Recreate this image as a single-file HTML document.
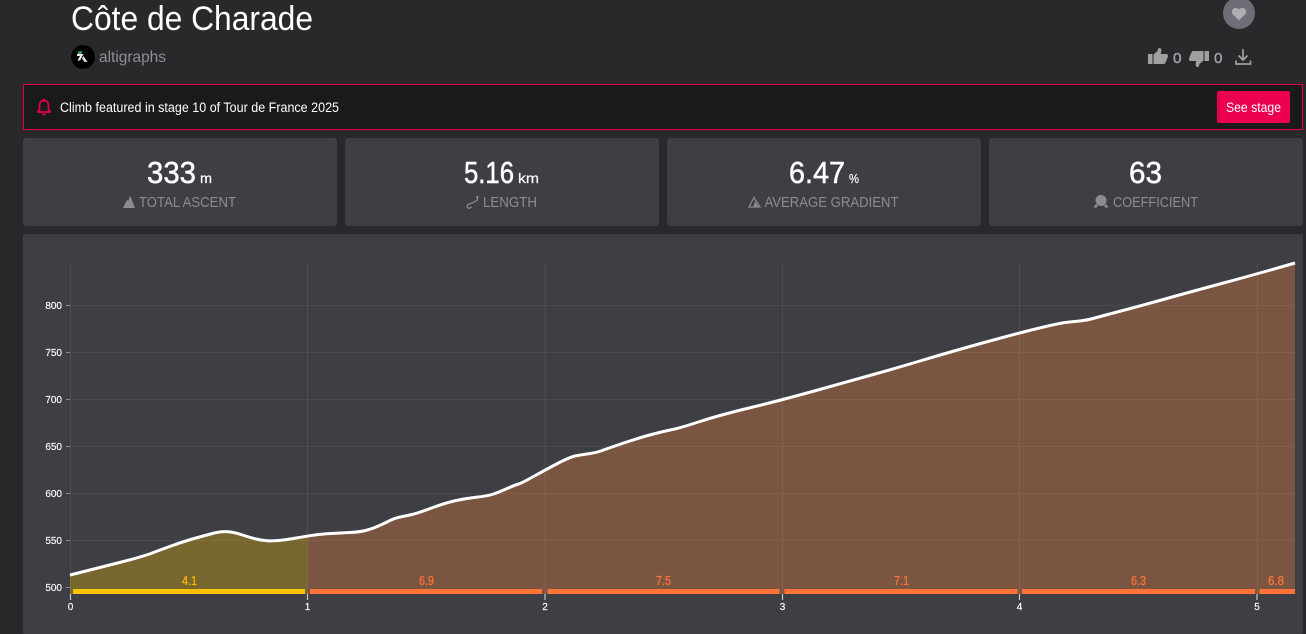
<!DOCTYPE html>
<html lang="en">
<head>
<meta charset="utf-8">
<title>Côte de Charade</title>
<style>
html,body{margin:0;padding:0;background:#29292b;width:1306px;height:634px;overflow:hidden}
svg{display:block}
text{font-family:"Liberation Sans",sans-serif}
</style>
</head>
<body>
<svg xmlns="http://www.w3.org/2000/svg" width="1306" height="634" viewBox="0 0 1306 634">
<defs>
<clipPath id="cy"><rect x="70" y="250" width="237.500" height="350"/></clipPath>
<clipPath id="co"><rect x="307.500" y="250" width="987.500" height="350"/></clipPath>
</defs>
<rect width="1306" height="634" fill="#29292b"/>

<!-- Header -->
<text x="71" y="30" font-size="34" fill="#fff" textLength="242" lengthAdjust="spacingAndGlyphs">Côte de Charade</text>
<circle cx="83" cy="57" r="12" fill="#000"/>
<path d="M78 52.500c1-1.500 3.500-1.500 4.500-.5l-1.500 2h-3z" fill="#2fae5a"/>
<path d="M77 54h6.500l-3.500 6.500h-2.500l2.500-4.500h-3z" fill="#eee"/>
<path d="M83.500 56l4 6h-3l-2.500-3.500z" fill="#ddd"/>
<text x="99" y="62" font-size="15.500" fill="#8e8e93" textLength="67" lengthAdjust="spacingAndGlyphs">altigraphs</text>

<circle cx="1239" cy="13" r="16" fill="#6e6e77"/>
<path d="M1239 20.500l-6.200-6.200a3.900 3.900 0 0 1 5.500-5.500l.7.7.7-.7a3.900 3.900 0 0 1 5.500 5.500z" fill="#adadb2"/>

<!-- thumbs up -->
<path d="M1148 54h4.500v10h-4.500z" fill="#a0a0a0"/>
<path d="M1153.500 54.500l4-3.500 1-3c2.200-.4 3.300 1.200 2.800 3.400l-.6 2.600h5.500c1.500 0 2.200 1.500 1.700 2.800l-2.400 6c-.4 1-1.200 1.200-2.200 1.200h-9.800z" fill="#a0a0a0"/>
<text x="1173" y="63" font-size="14.500" fill="#a3a3a8" stroke="#a3a3a8" stroke-width=".4" textLength="8.500" lengthAdjust="spacingAndGlyphs">0</text>
<!-- thumbs down -->
<path d="M1204.500 51h4.500v10h-4.500z" fill="#a0a0a0"/>
<path d="M1203.500 60.500l-4 3.500-1 3c-2.200.4-3.300-1.200-2.800-3.400l.6-2.600h-5.500c-1.500 0-2.200-1.500-1.700-2.800l2.400-6c.4-1 1.200-1.200 2.200-1.200h9.800z" fill="#a0a0a0"/>
<text x="1214" y="63" font-size="14.500" fill="#a3a3a8" stroke="#a3a3a8" stroke-width=".4" textLength="8.500" lengthAdjust="spacingAndGlyphs">0</text>
<!-- download -->
<path d="M1243 49v11M1238.500 55.500l4.500 4.500 4.500-4.500M1236 60.500v3.500h14.500v-3.500" fill="none" stroke="#a0a0a0" stroke-width="1.700"/>

<!-- Alert -->
<rect x="23.500" y="84.500" width="1279" height="45" fill="#1a1a1d" stroke="#e8004f" stroke-width="1"/>
<path d="M44 100.500c-3 0-4.500 2.200-4.500 5v4l-1.500 1.800v.7h12v-.7l-1.500-1.800v-4c0-2.800-1.500-5-4.500-5z" fill="none" stroke="#e8004f" stroke-width="1.700"/>
<circle cx="44" cy="99.800" r="1" fill="#e8004f"/>
<path d="M42 113.500h4a2 1.800 0 0 1-4 0z" fill="#e8004f"/>
<text x="60" y="112" font-size="13.500" fill="#fff" textLength="279" lengthAdjust="spacingAndGlyphs">Climb featured in stage 10 of Tour de France 2025</text>
<rect x="1217" y="91" width="73" height="32" rx="2" fill="#ea004f"/>
<text x="1226" y="112" font-size="14" fill="#fff" textLength="55" lengthAdjust="spacingAndGlyphs">See stage</text>

<!-- Stat cards -->
<rect x="23" y="138" width="314" height="88" rx="3" fill="#3e3f45"/>
<rect x="345" y="138" width="314" height="88" rx="3" fill="#3e3f45"/>
<rect x="667" y="138" width="314" height="88" rx="3" fill="#3e3f45"/>
<rect x="989" y="138" width="314" height="88" rx="3" fill="#3e3f45"/>

<g stroke="#fff" stroke-width=".5">
<text x="147" y="183" font-size="31" fill="#fff" textLength="49" lengthAdjust="spacingAndGlyphs">333</text>
<text x="464" y="183" font-size="31" fill="#fff" textLength="50" lengthAdjust="spacingAndGlyphs">5.16</text>
<text x="789" y="183" font-size="31" fill="#fff" textLength="56" lengthAdjust="spacingAndGlyphs">6.47</text>
<text x="1129" y="183" font-size="31" fill="#fff" textLength="33" lengthAdjust="spacingAndGlyphs">63</text>
</g>
<text x="200" y="183" font-size="14" fill="#fff" stroke="#fff" stroke-width=".2" textLength="12" lengthAdjust="spacingAndGlyphs">m</text>
<text x="518" y="183" font-size="14" fill="#fff" stroke="#fff" stroke-width=".2" textLength="21" lengthAdjust="spacingAndGlyphs">km</text>
<text x="849" y="183" font-size="13" fill="#fff" stroke="#fff" stroke-width=".2" textLength="10" lengthAdjust="spacingAndGlyphs">%</text>

<path d="M123 208l4-8 1.500 1 1-4.500 1 0 4.500 11.500z" fill="#8c8c92"/>
<text x="139" y="207" font-size="14.500" fill="#8c8c92" textLength="97" lengthAdjust="spacingAndGlyphs">TOTAL ASCENT</text>

<path d="M476 197c2 0 2 3 0 4l-4 2c-2 1-5 1-5 3.500s4 2 4.500 0" fill="none" stroke="#8c8c92" stroke-width="1.200"/>
<circle cx="477.500" cy="197" r="1" fill="#8c8c92"/>
<text x="483" y="207" font-size="14.500" fill="#8c8c92" textLength="54" lengthAdjust="spacingAndGlyphs">LENGTH</text>

<path d="M754 197.500l-5 9.500h11z" fill="none" stroke="#8c8c92" stroke-width="1.300"/>
<path d="M755 201l3.500 6h-5z" fill="#8c8c92"/>
<text x="764.500" y="207" font-size="14.500" fill="#8c8c92" textLength="134" lengthAdjust="spacingAndGlyphs">AVERAGE GRADIENT</text>

<circle cx="1101" cy="200.500" r="5.500" fill="#8c8c92"/>
<path d="M1096 204l-2.500 3.500 3 .3 1.500-2zM1106 204l2.500 3.500-3 .3-1.500-2z" fill="#8c8c92"/>
<text x="1113" y="207" font-size="14.500" fill="#8c8c92" textLength="85" lengthAdjust="spacingAndGlyphs">COEFFICIENT</text>

<!-- Chart panel -->
<rect x="23" y="234" width="1280" height="400" rx="2" fill="#3e3f45"/>

<!-- Area fills -->
<path clip-path="url(#cy)" fill="#78662f" d="M70 575L85 571.250Q100 567.500 121.500 562Q143 556.500 151.500 553.250Q160 550 172.500 545.500Q185 541 195 538.250Q205 535.500 211.500 533.750Q218 532 222 531.750Q226 531.500 230.500 532Q235 532.500 242.500 535Q250 537.500 256 539Q262 540.500 267 540.750Q272 541 278.500 540.500Q285 540 296.250 538Q307.500 536 314.750 535L314.750 594L70 594Z"/>
<path clip-path="url(#co)" fill="#7a5541" d="M296.250 538Q307.500 536 314.750 535Q322 534 331 533.500Q340 533 350 532.500Q360 532 366.500 530.250Q373 528.500 379 525.750Q385 523 390 520.500Q395 518 400 517Q405 516 411 514.750Q417 513.500 431 508.250Q445 503 455 500.750Q465 498.500 476 497.250Q487 496 492 494.500Q497 493 506 489Q515 485 518.500 484Q522 483 533.500 476.500Q545 470 557.500 463.500Q570 457 575 456Q580 455 588.500 453.750Q597 452.500 601.500 450.750Q606 449 623 443.250Q640 437.500 652.500 434.250Q665 431 672.500 429.500Q680 428 700 421.500Q720 415 751 407.500Q782 400 816 390.500Q850 381 875 374Q900 367 925 359.500Q950 352 982.500 343Q1015 334 1037.500 328.500Q1060 323 1067.500 322.250Q1075 321.500 1081.500 320.750Q1088 320 1094 318.250Q1100 316.500 1120 311.250Q1140 306 1165 299Q1190 292 1223.500 283Q1257 274 1295 263L1295 594L296.250 594Z"/>

<!-- Grid -->
<g stroke="#fff" fill="none" stroke-width="1">
<path stroke-opacity=".06" d="M70 305.500H1295M70 352.500H1295M70 399.500H1295M70 446.500H1295M70 493.500H1295M70 540.500H1295"/>
<path stroke-opacity=".08" d="M70.500 264V594M307.500 264V594M545 264V594M782.500 264V594M1019.500 264V594M1257.500 264V594"/>
</g>
<path d="M66 305.500h4M66 352.500h4M66 399.500h4M66 446.500h4M66 493.500h4M66 540.500h4M66 587.500h4" stroke="#8c8c92" stroke-width="1"/>

<!-- Gradient bars -->
<rect x="73" y="589" width="232" height="5" fill="#ffc000"/>
<rect x="310" y="589" width="232" height="5" fill="#ff7337"/>
<rect x="547.500" y="589" width="232" height="5" fill="#ff7337"/>
<rect x="784.500" y="589" width="233" height="5" fill="#ff7337"/>
<rect x="1022" y="589" width="233" height="5" fill="#ff7337"/>
<rect x="1259.500" y="589" width="35.500" height="5" fill="#ff7337"/>

<!-- X ticks -->
<path d="M70.500 594v6M307.500 594v6M545 594v6M782.500 594v6M1019.500 594v6M1257 594v6" stroke="#c8c8cc" stroke-width="1.200"/>

<!-- Profile line -->
<path fill="none" stroke="#fff" stroke-width="3" stroke-linejoin="round" d="M70 575L85 571.250Q100 567.500 121.500 562Q143 556.500 151.500 553.250Q160 550 172.500 545.500Q185 541 195 538.250Q205 535.500 211.500 533.750Q218 532 222 531.750Q226 531.500 230.500 532Q235 532.500 242.500 535Q250 537.500 256 539Q262 540.500 267 540.750Q272 541 278.500 540.500Q285 540 296.250 538Q307.500 536 314.750 535Q322 534 331 533.500Q340 533 350 532.500Q360 532 366.500 530.250Q373 528.500 379 525.750Q385 523 390 520.500Q395 518 400 517Q405 516 411 514.750Q417 513.500 431 508.250Q445 503 455 500.750Q465 498.500 476 497.250Q487 496 492 494.500Q497 493 506 489Q515 485 518.500 484Q522 483 533.500 476.500Q545 470 557.500 463.500Q570 457 575 456Q580 455 588.500 453.750Q597 452.500 601.500 450.750Q606 449 623 443.250Q640 437.500 652.500 434.250Q665 431 672.500 429.500Q680 428 700 421.500Q720 415 751 407.500Q782 400 816 390.500Q850 381 875 374Q900 367 925 359.500Q950 352 982.500 343Q1015 334 1037.500 328.500Q1060 323 1067.500 322.250Q1075 321.500 1081.500 320.750Q1088 320 1094 318.250Q1100 316.500 1120 311.250Q1140 306 1165 299Q1190 292 1223.500 283Q1257 274 1295 263"/>

<!-- Y labels -->
<g font-size="10" fill="#fff" stroke="#fff" stroke-width=".15" text-anchor="end">
<text x="62" y="309">800</text>
<text x="62" y="356">750</text>
<text x="62" y="403">700</text>
<text x="62" y="450">650</text>
<text x="62" y="497">600</text>
<text x="62" y="544">550</text>
<text x="62" y="591">500</text>
</g>
<!-- X labels -->
<g font-size="10" fill="#fff" stroke="#fff" stroke-width=".15" text-anchor="middle">
<text x="70.500" y="610">0</text>
<text x="307.500" y="610">1</text>
<text x="545" y="610">2</text>
<text x="782.500" y="610">3</text>
<text x="1019.500" y="610">4</text>
<text x="1257" y="610">5</text>
</g>
<!-- Gradient labels -->
<g font-size="13" stroke-width=".3">
<text x="182" y="585" fill="#f5b800" stroke="#f5b800" textLength="15" lengthAdjust="spacingAndGlyphs">4.1</text>
<text x="419" y="585" fill="#ff7337" stroke="#ff7337" textLength="15" lengthAdjust="spacingAndGlyphs">6.9</text>
<text x="656" y="585" fill="#ff7337" stroke="#ff7337" textLength="15" lengthAdjust="spacingAndGlyphs">7.5</text>
<text x="894" y="585" fill="#ff7337" stroke="#ff7337" textLength="15" lengthAdjust="spacingAndGlyphs">7.1</text>
<text x="1131" y="585" fill="#ff7337" stroke="#ff7337" textLength="15" lengthAdjust="spacingAndGlyphs">6.3</text>
<text x="1268" y="585" fill="#ff7337" stroke="#ff7337" textLength="16" lengthAdjust="spacingAndGlyphs">6.8</text>
</g>
</svg>
</body>
</html>
